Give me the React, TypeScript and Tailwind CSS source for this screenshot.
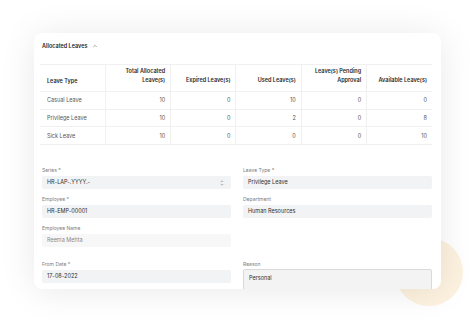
import { ChevronUp } from "lucide-react";

const rows = [
  { type: "Casual Leave", total: 10, expired: 0, used: 10, pending: 0, available: 0 },
  { type: "Privilege Leave", total: 10, expired: 0, used: 2, pending: 0, available: 8 },
  { type: "Sick Leave", total: 10, expired: 0, used: 0, pending: 0, available: 10 },
];

const heads = [
  ["Total Allocated", "Leave(s)"],
  ["Expired Leave(s)"],
  ["Used Leave(s)"],
  ["Leave(s) Pending", "Approval"],
  ["Available Leave(s)"],
];

function Field({
  label,
  value,
  required,
  select,
  muted,
}: {
  label: string;
  value: string;
  required?: boolean;
  select?: boolean;
  muted?: boolean;
}) {
  return (
    <div className="flex flex-col">
      <div className="text-[5px] leading-[6px] text-[#7c7c7c]">
        {label}
        {required && " *"}
      </div>
      <div
        className={`mt-[3px] h-[13px] rounded-[2px] px-[5px] flex items-center justify-between text-[5.5px] ${
          muted ? "bg-[#f7f7f8] text-[#8a8a8a]" : "bg-[#f2f3f4] text-[#2e2e2e]"
        }`}
      >
        <span>{value}</span>
        {select && (
          <svg width="4" height="6" viewBox="0 0 4 6" className="mr-[2px]">
            <path d="M0.8 2 L2 0.8 L3.2 2" fill="none" stroke="#777" strokeWidth="0.6" />
            <path d="M0.8 4 L2 5.2 L3.2 4" fill="none" stroke="#777" strokeWidth="0.6" />
          </svg>
        )}
      </div>
    </div>
  );
}

export default function App() {
  return (
    <div
      className="relative w-[474px] h-[323px] overflow-hidden bg-white pt-[33px] pl-[34px]"
      style={{ fontFamily: "Inter, 'Noto Sans', sans-serif" }}
    >
      <div className="absolute left-[395px] top-[238px] w-[68px] h-[68px] rounded-full bg-[#fdf1df]" />
      <div className="relative w-[407px] h-[256px] overflow-hidden rounded-[8px] bg-white shadow-[0_2px_36px_rgba(0,0,0,0.09)] pl-[6px] pr-[9px]">
        <div className="pt-[10px] pl-[2px] flex items-center gap-[3px] text-[5.5px] leading-[6px] font-semibold text-[#1f1f1f]">
          Allocated Leaves
          <ChevronUp size={6} strokeWidth={2} className="text-[#555] ml-[1px]" />
        </div>

        <table className="mt-[15px] w-full table-fixed border-collapse text-[5.5px]">
          <thead>
            <tr className="h-[27px] border-y border-[#f0f0f1]">
              <th className="text-left align-bottom pb-[6px] pl-[7px] font-semibold text-[#2a2a2a] leading-[8px]">
                Leave Type
              </th>
              {heads.map((h, i) => (
                <th
                  key={i}
                  className="text-right align-bottom pb-[6px] pr-[5px] font-semibold text-[#2a2a2a] leading-[9px] border-l border-[#f0f0f1]"
                >
                  {h.map((l) => (
                    <div key={l}>{l}</div>
                  ))}
                </th>
              ))}
            </tr>
          </thead>
          <tbody>
            {rows.map((r) => (
              <tr key={r.type} className="h-[17.7px] border-b border-[#f0f0f1] text-[#555]">
                <td className="pl-[7px]">{r.type}</td>
                {[r.total, r.expired, r.used, r.pending, r.available].map((v, i) => (
                  <td key={i} className="text-right pr-[5px] border-l border-[#f0f0f1]">
                    {v}
                  </td>
                ))}
              </tr>
            ))}
          </tbody>
        </table>

        <div className="mt-[22px] pl-[2px] grid grid-cols-2 gap-x-[12px]">
          <div className="flex flex-col gap-[7px]">
            <Field label="Series" value="HR-LAP-.YYYY.-" required select />
            <Field label="Employee" value="HR-EMP-00001" required />
            <Field label="Employee Name" value="Reema Mehta" muted />
          </div>
          <div className="flex flex-col gap-[7px]">
            <Field label="Leave Type" value="Privilege Leave" required />
            <Field label="Department" value="Human Resources" />
          </div>
        </div>

        <div className="mt-[14px] pl-[2px] grid grid-cols-2 gap-x-[12px]">
          <Field label="From Date" value="17-08-2022" required />
          <div className="flex flex-col">
            <div className="text-[5px] leading-[6px] text-[#7c7c7c]">Reason</div>
            <div className="mt-[2px] h-[30px] rounded-[2px] border border-[#d9d9db] bg-[#f3f3f4] px-[5px] pt-[4px] text-[5.5px] text-[#2e2e2e]">
              Personal
            </div>
          </div>
        </div>
      </div>
    </div>
  );
}
